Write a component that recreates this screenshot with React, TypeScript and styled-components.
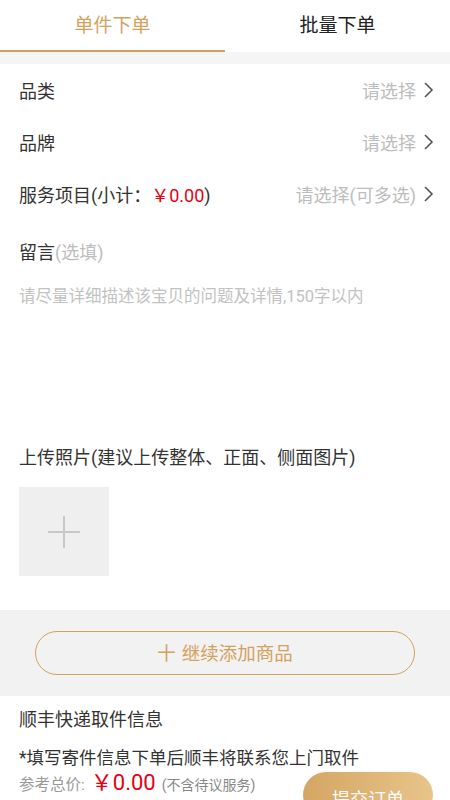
import React from "react";
import styled, { createGlobalStyle } from "styled-components";

const GOLD = "#d3a15c";

const Global = createGlobalStyle`
  html, body { margin: 0; padding: 0; background: #fff; overflow: hidden; }
  body { font-family: Roboto, "Noto Sans CJK SC", sans-serif; color: #333; }
  * { box-sizing: border-box; }
`;

const Page = styled.div`
  width: 450px;
  display: flex;
  flex-direction: column;
`;

const Tabs = styled.div`
  display: flex;
  height: 52px;
  background: #fff;
`;

const Tab = styled.div<{ $active?: boolean }>`
  flex: 1;
  display: flex;
  align-items: center;
  justify-content: center;
  font-size: 19px;
  padding-bottom: 4px;
  color: ${(p) => (p.$active ? GOLD : "#222")};
  border-bottom: 2px solid ${(p) => (p.$active ? GOLD : "transparent")};
`;

const Band = styled.div<{ $h: number }>`
  height: ${(p) => p.$h}px;
  background: #f5f5f5;
`;

const Row = styled.div`
  height: 52px;
  display: flex;
  align-items: center;
  justify-content: space-between;
  padding: 0 16px 0 19px;
  font-size: 18px;
`;

const Label = styled.span`
  color: #333;
`;

const Red = styled.span`
  color: #e60012;
`;

const Right = styled.span`
  display: flex;
  align-items: center;
  gap: 6px;
  color: #bdbdbd;
`;

const Chevron = () => (
  <svg width="12" height="18" viewBox="0 0 12 18">
    <path d="M3 2 L10 9 L3 16" fill="none" stroke="#555" strokeWidth="1.6" />
  </svg>
);

const Section = styled.div<{ $pt?: number; $pb?: number }>`
  padding: ${(p) => p.$pt ?? 0}px 19px ${(p) => p.$pb ?? 0}px;
  background: #fff;
`;

const Title = styled.div`
  font-size: 18px;
  line-height: 22px;
  color: #333;
`;

const Hint = styled.span`
  color: #bdbdbd;
`;

const Placeholder = styled.div`
  margin-top: 22px;
  height: 161px;
  font-size: 16.5px;
  line-height: 22px;
  color: #c2c2c2;
`;

const UploadBox = styled.div`
  margin-top: 18px;
  width: 90px;
  height: 89px;
  background: #efefef;
  display: flex;
  align-items: center;
  justify-content: center;
`;

const GraySection = styled.div`
  margin-top: 34px;
  height: 86px;
  background: #f2f2f2;
  display: flex;
  align-items: center;
  justify-content: center;
`;

const AddButton = styled.div`
  width: 380px;
  height: 44px;
  border: 1.5px solid ${GOLD};
  border-radius: 22px;
  display: flex;
  align-items: center;
  justify-content: center;
  gap: 6px;
  color: ${GOLD};
  font-size: 18.5px;
  padding-bottom: 2px;
`;

const Info = styled.div`
  padding: 13px 19px 0;
  display: flex;
  flex-direction: column;
`;

const Note = styled.div`
  margin-top: 16px;
  font-size: 17.5px;
  line-height: 22px;
  color: #333;
`;

const Footer = styled.div`
  display: flex;
  justify-content: space-between;
  align-items: flex-start;
  margin-right: -2px;
`;

const Price = styled.div`
  display: flex;
  align-items: baseline;
  gap: 6px;
  line-height: 28px;
  color: #999;
  font-size: 15.5px;
`;

const Amount = styled.span`
  color: #e60012;
  font-size: 22px;
`;

const Small = styled.span`
  font-size: 14px;
  color: #888;
`;

const Submit = styled.div`
  margin-top: 3px;
  width: 130px;
  height: 46px;
  border-radius: 23px;
  background: linear-gradient(90deg, #d4a663, #e8c48a);
  color: #fff;
  font-size: 18px;
  display: flex;
  align-items: center;
  justify-content: center;
  padding-top: 6px;
`;

export default function App() {
  return (
    <Page>
      <Global />
      <Tabs>
        <Tab $active>单件下单</Tab>
        <Tab>批量下单</Tab>
      </Tabs>
      <Band $h={12} />
      <Row>
        <Label>品类</Label>
        <Right>
          请选择
          <Chevron />
        </Right>
      </Row>
      <Row>
        <Label>品牌</Label>
        <Right>
          请选择
          <Chevron />
        </Right>
      </Row>
      <Row>
        <Label>
          服务项目(小计：<Red>￥0.00</Red>)
        </Label>
        <Right>
          请选择(可多选)
          <Chevron />
        </Right>
      </Row>
      <Section $pt={22}>
        <Title>
          留言<Hint>(选填)</Hint>
        </Title>
        <Placeholder>请尽量详细描述该宝贝的问题及详情,150字以内</Placeholder>
        <Title>上传照片(建议上传整体、正面、侧面图片)</Title>
        <UploadBox>
          <svg width="34" height="34" viewBox="0 0 34 34">
            <path d="M17 1 V33 M1 17 H33" stroke="#c8c8c8" strokeWidth="2" />
          </svg>
        </UploadBox>
      </Section>
      <GraySection>
        <AddButton>
          <span>十</span>
          <span>继续添加商品</span>
        </AddButton>
      </GraySection>
      <Info>
        <Title>顺丰快递取件信息</Title>
        <Note>*填写寄件信息下单后顺丰将联系您上门取件</Note>
        <Footer>
          <Price>
            参考总价:
            <Amount>￥0.00</Amount>
            <Small>(不含待议服务)</Small>
          </Price>
          <Submit>提交订单</Submit>
        </Footer>
      </Info>
    </Page>
  );
}
